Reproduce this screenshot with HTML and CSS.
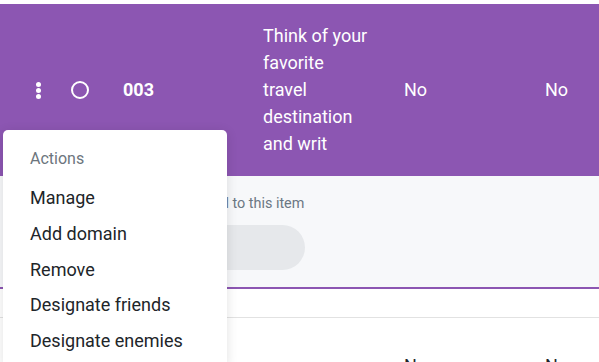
FILE: index.html
```html
<!DOCTYPE html>
<html lang="en">
<head>
<meta charset="utf-8">
<title>Items</title>
<link rel="stylesheet" href="styles.css">
</head>
<body>
<div class="table">
  <div class="row row-active">
    <div class="cell cell-kebab">
      <span class="kebab"><i></i><i></i><i></i></span>
    </div>
    <div class="cell cell-check"><span class="radio"></span></div>
    <div class="cell cell-id">003</div>
    <div class="cell cell-text">Think of your favorite travel destination and writ</div>
    <div class="cell cell-no">No</div>
    <div class="cell cell-no2">No</div>
  </div>
  <div class="detail">
    <p class="detail-note">No attachments have been added to this item</p>
    <span class="detail-btn"></span>
  </div>
  <div class="spacer-row"></div>
  <div class="row row-next">
    <div class="cell cell-kebab"></div>
    <div class="cell cell-check"></div>
    <div class="cell cell-id"></div>
    <div class="cell cell-text"></div>
    <div class="cell cell-no">No</div>
    <div class="cell cell-no2">No</div>
  </div>

  <div class="menu">
    <div class="menu-header">Actions</div>
    <div class="menu-item">Manage</div>
    <div class="menu-item">Add domain</div>
    <div class="menu-item">Remove</div>
    <div class="menu-item">Designate friends</div>
    <div class="menu-item">Designate enemies</div>
  </div>
</div>
</body>
</html>
```
FILE: styles.css
```css
html, body {
  margin: 0;
  padding: 0;
  background: #ffffff;
  font-family: Roboto, "Liberation Sans", sans-serif;
  overflow: hidden;
}

.table {
  position: relative;
  padding-top: 4px;
  width: 599px;
}

.row {
  display: grid;
  grid-template-columns: 71px 52px 140px 141px 141px 1fr;
  align-items: center;
  font-size: 18px;
  line-height: 27px;
}

.row-active {
  background: #8c56b2;
  color: #ffffff;
  padding: 18px 0 19px;
}

.cell-kebab {
  display: flex;
  justify-content: flex-end;
  padding-right: 30px;
}

.kebab {
  display: flex;
  flex-direction: column;
  gap: 1px;
  margin-top: 1px;
}

.kebab i {
  display: block;
  width: 5px;
  height: 5px;
  border-radius: 50%;
  background: #ffffff;
}

.cell-check {
  display: flex;
  align-items: center;
}

.radio {
  display: block;
  width: 14px;
  height: 14px;
  border: 2px solid #ffffff;
  border-radius: 50%;
  margin-top: 1px;
}

.cell-id {
  font-weight: 700;
}

.cell-text {
  padding-right: 33px;
}

.detail {
  background: #f7f8fa;
  border-bottom: 2px solid #8c56b2;
  height: 111px;
  display: flex;
  flex-direction: column;
  align-items: flex-start;
  padding-left: 14px;
}

.detail-note {
  margin: 18px 0 0;
  font-size: 14.4px;
  line-height: 20px;
  color: #6b7783;
}

.detail-btn {
  display: block;
  margin-top: 11px;
  margin-left: 86px;
  width: 205px;
  height: 45px;
  border-radius: 23px;
  background: #e6e8eb;
}

.spacer-row {
  height: 28px;
  border-bottom: 1px solid #e2e2e2;
}

.row-next {
  color: #212529;
  padding-top: 34px;
}

.menu {
  position: absolute;
  left: 3px;
  top: 130px;
  width: 224px;
  background: #ffffff;
  border-radius: 5px;
  box-shadow: 0 2px 12px rgba(0, 0, 0, 0.12);
  padding-bottom: 8px;
}

.menu-header {
  padding: 19px 27px 12px;
  font-size: 16px;
  line-height: 19px;
  color: #6c757d;
}

.menu-item {
  padding: 6px 27px;
  font-size: 18px;
  line-height: 23.75px;
  color: #212529;
}
```
